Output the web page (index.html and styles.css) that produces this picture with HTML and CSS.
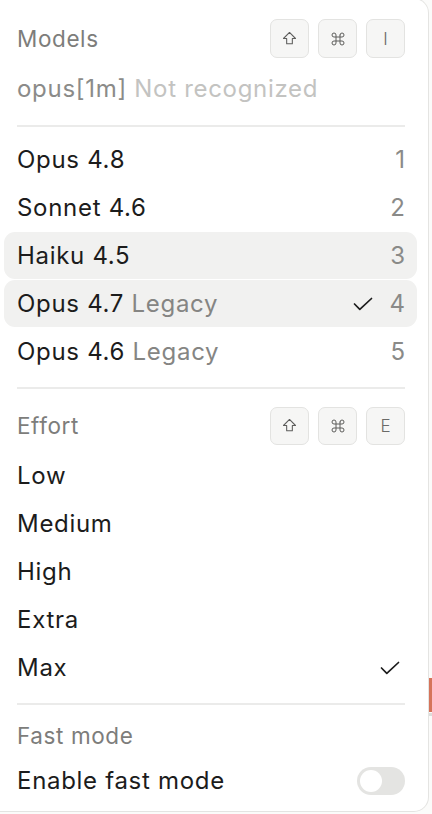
FILE: index.html
```html
<!DOCTYPE html>
<html>
<head>
<meta charset="utf-8">
<link rel="stylesheet" href="styles.css">
</head>
<body>
<div class="page">
  <div class="card">
    <div class="section-head">
      <span class="label">Models</span>
      <div class="keys">
        <span class="key"><svg viewBox="0 0 24 24" width="17" height="17"><path d="M12 3.5 L3.5 12 H8 V19.5 H16 V12 H20.5 Z" fill="none" stroke="currentColor" stroke-width="1.5" stroke-linejoin="round"/></svg></span>
        <span class="key"><svg viewBox="0 0 24 24" width="16" height="16"><path d="M15 6v12a3 3 0 1 0 3-3H6a3 3 0 1 0 3 3V6a3 3 0 1 0-3 3h12a3 3 0 1 0-3-3" fill="none" stroke="currentColor" stroke-width="1.5" stroke-linecap="round" stroke-linejoin="round"/></svg></span>
        <span class="key key-text">I</span>
      </div>
    </div>
    <div class="unrec"><span class="mid">opus[1m]</span> <span class="faint">Not recognized</span></div>
    <div class="divider div1"></div>
    <div class="list">
      <div class="row"><span class="name">Opus 4.8</span><span class="num">1</span></div>
      <div class="row"><span class="name">Sonnet 4.6</span><span class="num">2</span></div>
      <div class="row hl"><span class="name">Haiku 4.5</span><span class="num">3</span></div>
      <div class="row hl"><span class="name">Opus 4.7 <span class="sub">Legacy</span></span><span class="end"><svg class="check" viewBox="0 0 20 14" width="20" height="14"><path d="M1.5 7 L6.8 12.3 L18.5 1.5" fill="none" stroke="currentColor" stroke-width="1.7" stroke-linecap="round" stroke-linejoin="round"/></svg><span class="num">4</span></span></div>
      <div class="row"><span class="name">Opus 4.6 <span class="sub">Legacy</span></span><span class="num">5</span></div>
    </div>
    <div class="divider div2"></div>
    <div class="section-head effort-head">
      <span class="label">Effort</span>
      <div class="keys">
        <span class="key"><svg viewBox="0 0 24 24" width="17" height="17"><path d="M12 3.5 L3.5 12 H8 V19.5 H16 V12 H20.5 Z" fill="none" stroke="currentColor" stroke-width="1.5" stroke-linejoin="round"/></svg></span>
        <span class="key"><svg viewBox="0 0 24 24" width="16" height="16"><path d="M15 6v12a3 3 0 1 0 3-3H6a3 3 0 1 0 3 3V6a3 3 0 1 0-3 3h12a3 3 0 1 0-3-3" fill="none" stroke="currentColor" stroke-width="1.5" stroke-linecap="round" stroke-linejoin="round"/></svg></span>
        <span class="key key-text">E</span>
      </div>
    </div>
    <div class="list effort-list">
      <div class="row"><span class="name">Low</span></div>
      <div class="row"><span class="name">Medium</span></div>
      <div class="row"><span class="name">High</span></div>
      <div class="row"><span class="name">Extra</span></div>
      <div class="row"><span class="name">Max</span><svg class="check check-max" viewBox="0 0 20 14" width="20" height="14"><path d="M1.5 7 L6.8 12.3 L18.5 1.5" fill="none" stroke="currentColor" stroke-width="1.7" stroke-linecap="round" stroke-linejoin="round"/></svg></div>
    </div>
    <div class="divider div3"></div>
    <div class="fast-label label">Fast mode</div>
    <div class="row fast-row"><span class="name">Enable fast mode</span><span class="toggle"><span class="knob"></span></span></div>
  </div>
  <div class="side">
    <div class="accent"></div>
    <div class="accent-grey"></div>
  </div>
</div>
</body>
</html>
```
FILE: styles.css
```css
* { box-sizing: border-box; }
html, body {
  margin: 0;
  padding: 0;
  background: #fbfbfa;
  font-family: Inter, "Noto Sans", sans-serif;
  color: #1c1c1c;
}
.page {
  display: flex;
  width: 432px;
  height: 814px;
  overflow: hidden;
}
.card {
  width: 429px;
  height: 814px;
  flex: none;
  background: #ffffff;
  border: 1px solid #e4e4e2;
  border-left: none;
  border-radius: 0 15px 15px 0;
  margin-top: -2px;
  padding: 20px 23px 0 17px;
  display: flex;
  flex-direction: column;
  font-size: 24px;
  letter-spacing: 0.7px;
}
.section-head {
  display: flex;
  align-items: center;
  justify-content: space-between;
  height: 39px;
}
.label {
  color: #7d7d7b;
  font-size: 22.5px;
  letter-spacing: 0.6px;
}
.keys {
  display: flex;
  gap: 9px;
  letter-spacing: 0;
}
.key {
  width: 39px;
  height: 39px;
  border: 1px solid #e3e3e1;
  background: #f6f6f5;
  border-radius: 7px;
  display: flex;
  align-items: center;
  justify-content: center;
  color: #5e5e5c;
}
.key-text {
  font-size: 17px;
  font-weight: 300;
  color: #6a6a68;
}
.effort-head .key { height: 38px; }
.unrec {
  margin-top: 7px;
  line-height: 48px;
  height: 48px;
}
.mid { color: #8b8b89; }
.faint { color: #c3c3c1; }
.divider {
  height: 2px;
  background: #ebebea;
}
.div1 { margin-top: 12px; }
.div2 { margin-top: 12px; }
.div3 { margin-top: 12px; }
.list {
  margin: 9px -12px 0 -13px;
  display: flex;
  flex-direction: column;
  gap: 1px;
}
.row {
  height: 47px;
  display: flex;
  align-items: center;
  justify-content: space-between;
  padding: 0 12px 0 13px;
  border-radius: 11px;
}
.row.hl { background: #f1f1f0; }
.sub { color: #858583; }
.num { color: #8a8a88; letter-spacing: 0; }
.end {
  display: flex;
  align-items: center;
  gap: 16px;
}
.check { color: #1c1c1c; display: block; }
.check-max { margin-right: 5px; }
.effort-head { margin-top: 17px; }
.effort-list { margin-top: 7px; }
.fast-label {
  margin-top: 11px;
  line-height: 40px;
}
.fast-row {
  margin: 1px -12px 0 -13px;
}
.toggle {
  width: 48px;
  height: 28px;
  border-radius: 14px;
  background: #e4e4e2;
  padding: 3px;
  display: flex;
}
.knob {
  width: 22px;
  height: 22px;
  border-radius: 50%;
  background: #ffffff;
}
.side {
  flex: 1;
  display: flex;
  flex-direction: column;
}
.accent {
  margin-top: 678px;
  height: 34px;
  background: #d5745a;
}
.accent-grey {
  margin-top: 1px;
  height: 3px;
  background: #dddddb;
}
```
